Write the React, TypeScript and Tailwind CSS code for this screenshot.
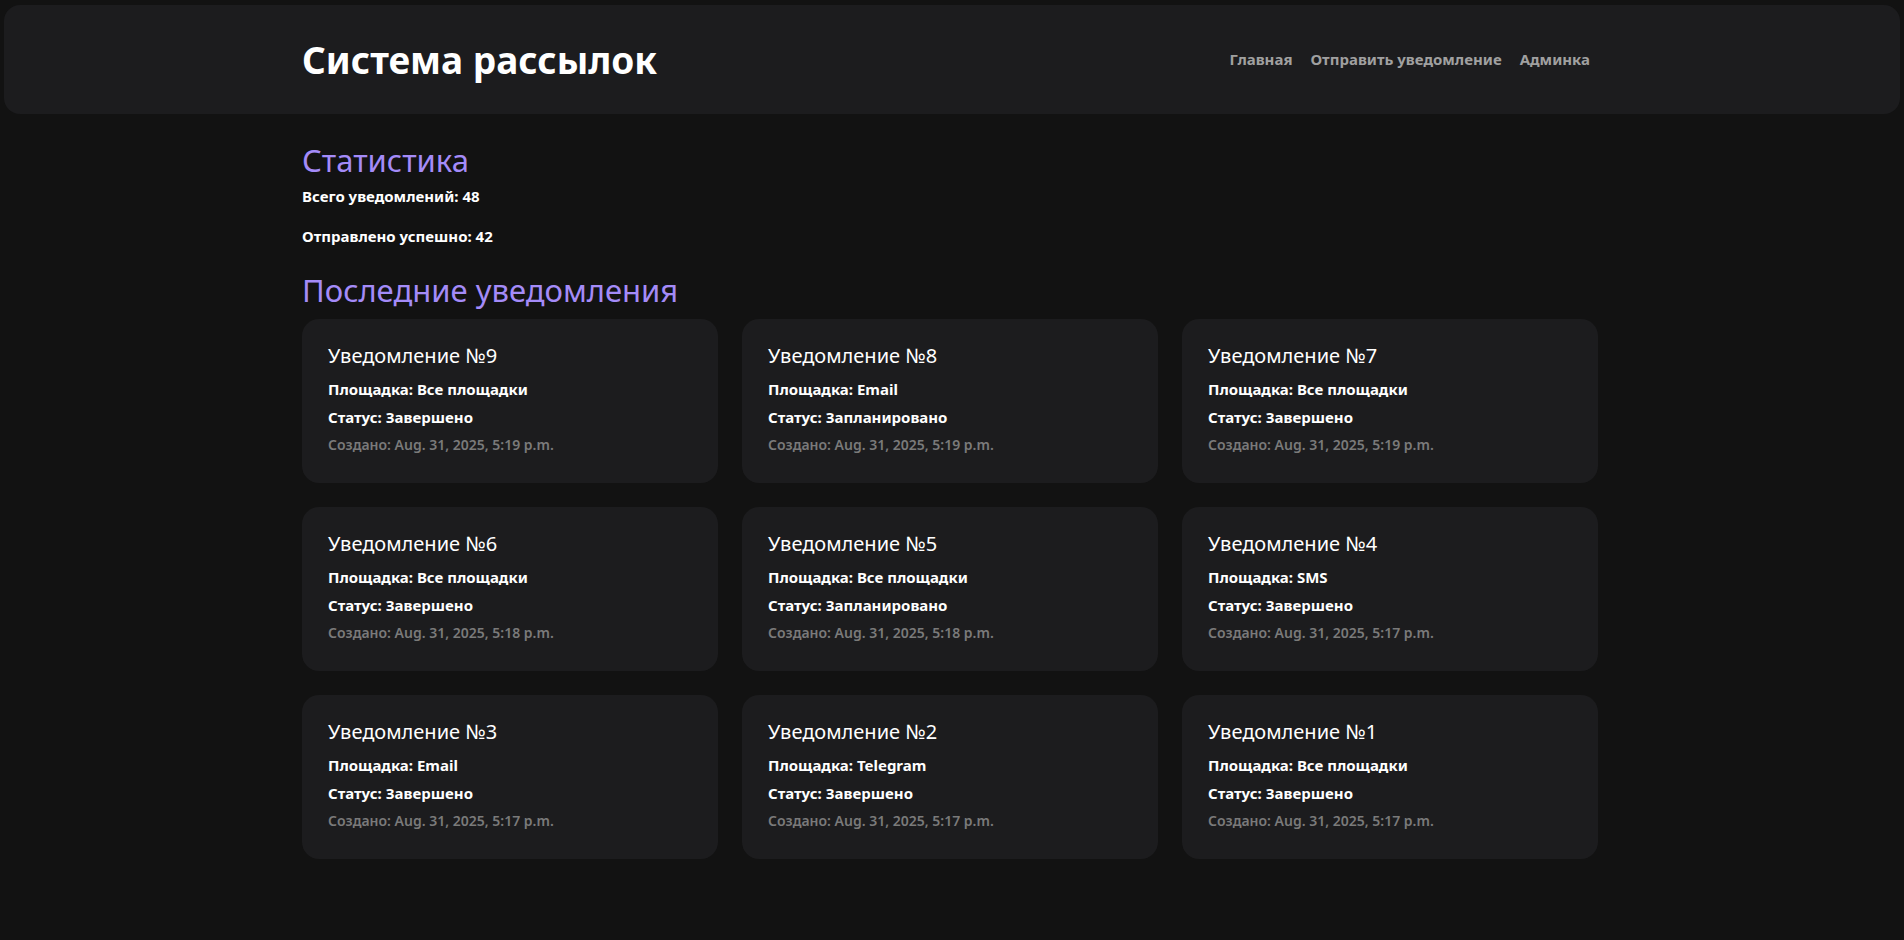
import React from "react";

const cards = [
  { n: 9, p: "Все площадки", s: "Завершено", d: "Aug. 31, 2025, 5:19 p.m." },
  { n: 8, p: "Email", s: "Запланировано", d: "Aug. 31, 2025, 5:19 p.m." },
  { n: 7, p: "Все площадки", s: "Завершено", d: "Aug. 31, 2025, 5:19 p.m." },
  { n: 6, p: "Все площадки", s: "Завершено", d: "Aug. 31, 2025, 5:18 p.m." },
  { n: 5, p: "Все площадки", s: "Запланировано", d: "Aug. 31, 2025, 5:18 p.m." },
  { n: 4, p: "SMS", s: "Завершено", d: "Aug. 31, 2025, 5:17 p.m." },
  { n: 3, p: "Email", s: "Завершено", d: "Aug. 31, 2025, 5:17 p.m." },
  { n: 2, p: "Telegram", s: "Завершено", d: "Aug. 31, 2025, 5:17 p.m." },
  { n: 1, p: "Все площадки", s: "Завершено", d: "Aug. 31, 2025, 5:17 p.m." },
];

export default function App() {
  return (
    <div className="min-h-[940px] bg-[#121212] text-white pt-[5px] px-[4px] font-['Noto_Sans',sans-serif]">
      <header className="h-[109px] rounded-[16px] bg-[#1c1c1e] flex items-center">
        <div className="w-[1300px] mx-auto flex items-center justify-between">
          <h1 className="text-[37px] font-bold leading-none">Система рассылок</h1>
          <nav className="flex gap-[18px] pr-[12px] text-[15px] font-bold text-[#a0a0a0]">
            <span>Главная</span>
            <span>Отправить уведомление</span>
            <span>Админка</span>
          </nav>
        </div>
      </header>
      <main className="w-[1300px] mx-auto">
        <h2 className="mt-[26px] text-[31px] leading-[40px] text-[#a48bf8]">Статистика</h2>
        <p className="mt-[5px] text-[15px] font-bold leading-[22px]">Всего уведомлений: 48</p>
        <p className="mt-[18px] text-[15px] font-bold leading-[22px]">Отправлено успешно: 42</p>
        <h2 className="mt-[23px] text-[31px] leading-[40px] text-[#a48bf8]">Последние уведомления</h2>
        <div className="mt-[9px] grid grid-cols-3 gap-x-[24px] gap-y-[24px] w-[1296px]">
          {cards.map((c) => (
            <div key={c.n} className="h-[164px] rounded-[17px] bg-[#1c1c1e] px-[26px] pt-[22px]">
              <h3 className="text-[20px] leading-[30px]">Уведомление №{c.n}</h3>
              <p className="mt-[6px] text-[15px] font-bold leading-[24px]">Площадка: {c.p}</p>
              <p className="mt-[4px] text-[15px] font-bold leading-[24px]">Статус: {c.s}</p>
              <p className="mt-[4px] text-[14px] font-semibold leading-[24px] text-[#7a7a7a]">Создано: {c.d}</p>
            </div>
          ))}
        </div>
      </main>
    </div>
  );
}
